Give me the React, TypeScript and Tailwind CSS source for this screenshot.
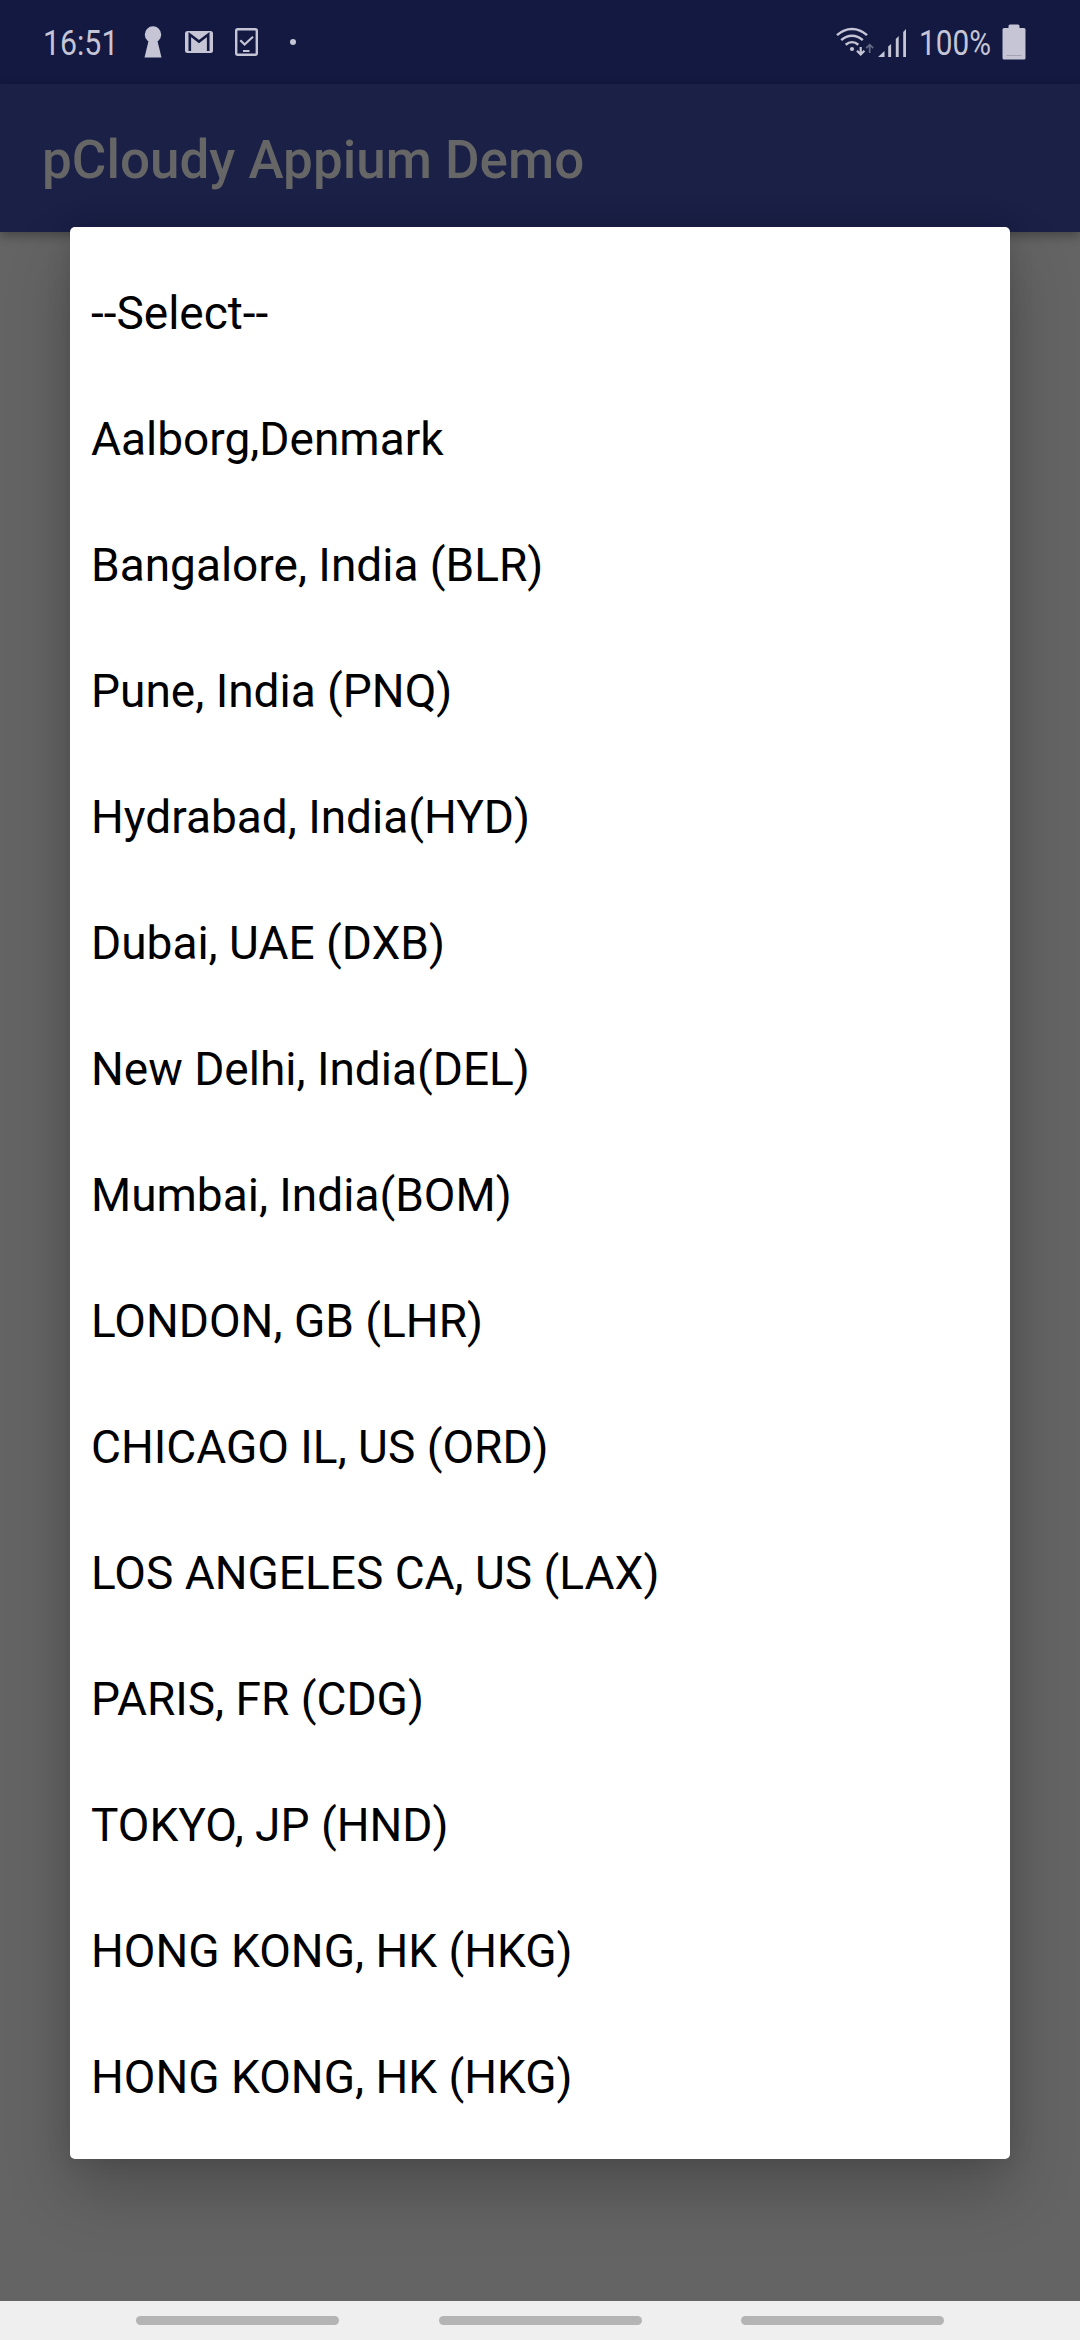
const options = [
  '--Select--',
  'Aalborg,Denmark',
  'Bangalore, India (BLR)',
  'Pune, India (PNQ)',
  'Hydrabad, India(HYD)',
  'Dubai, UAE (DXB)',
  'New Delhi, India(DEL)',
  'Mumbai, India(BOM)',
  'LONDON, GB (LHR)',
  'CHICAGO IL, US (ORD)',
  'LOS ANGELES CA, US (LAX)',
  'PARIS, FR (CDG)',
  'TOKYO, JP (HND)',
  'HONG KONG, HK (HKG)',
  'HONG KONG, HK (HKG)',
];

function KeyholeIcon() {
  return (
    <svg className="ml-[27px] h-[32px] w-[18px]" viewBox="0 0 18 32" fill="currentColor">
      <circle cx="9" cy="8.5" r="8.2" />
      <path d="M5 13h8l4.500 18.500H.5z" />
    </svg>
  );
}

function MailIcon() {
  return (
    <svg className="ml-[23px] h-[24px] w-[28px]" viewBox="0 0 28 24">
      <rect x="0" y="1" width="28" height="22" rx="2.5" fill="currentColor" />
      <path d="M4.8 21V4.5L14 11.5l9.2-7V21" fill="none" stroke="#131940" strokeWidth="2.6" />
    </svg>
  );
}

function DeviceCheckIcon() {
  return (
    <svg className="ml-[22px] h-[28px] w-[23px]" viewBox="0 0 23 28" fill="none" stroke="currentColor">
      <rect x="1.2" y="1.2" width="20.6" height="25.6" rx="1.5" strokeWidth="2.4" />
      <path d="M5.3 12.2l4.3 4.3 8.4-7.7" strokeWidth="2.2" />
      <path d="M8 23h6.5" strokeWidth="2" />
    </svg>
  );
}

function WifiIcon() {
  return (
    <svg className="h-[30px] w-[38px]" viewBox="0 0 38 30" fill="none" stroke="currentColor" strokeWidth="2.5">
      <path d="M1 8.2C10-.2 22-.2 31 8.2" />
      <path d="M5.2 13.2c6.5-6 15.1-6 21.6 0" />
      <path d="M9.7 17.8c3.8-3.4 8.8-3.4 12.6 0" />
      <circle cx="16" cy="22" r="2.1" fill="currentColor" stroke="none" />
      <path d="M24.7 20v7M21 23.8l3.700 3.700 3.700-3.700" strokeWidth="2.2" />
      <path d="M33.7 26v-8M30.2 21.2l3.500-3.500 3.500 3.500" strokeWidth="1.8" opacity="0.45" />
    </svg>
  );
}

function SignalIcon() {
  return (
    <svg className="mt-px ml-[4px] h-[29px] w-[29px]" viewBox="0 0 29 29" fill="currentColor">
      <path d="M0 29l6.500-6v6zM10.200 29V18.500l2.900-2.500v13zM17.800 29V11l2.900-3v21zM25.200 29V4L28 1v28z" />
    </svg>
  );
}

function BatteryIcon() {
  return (
    <svg className="ml-[11px] h-[36px] w-[24px]" viewBox="0 0 24 36">
      <path d="M6.500 4V2q0-1.500 1.500-1.500h8q1.500 0 1.500 1.500v2H22q1.500 0 1.500 1.500V34q0 1.500-1.500 1.500H2Q.5 35.500.5 34V5.500Q.5 4 2 4z" fill="currentColor" />
      <path d="M4.500 31.500h15" stroke="#a3a3b5" strokeWidth="1" />
    </svg>
  );
}

function StatusBar() {
  return (
    <div className="flex h-[84px] items-center justify-between bg-[#131940] pr-[54px] pl-[43px] text-[#c5c5d5]">
      <div className="flex items-center">
        <div className="w-[74px] pt-[4px] text-[35px] leading-[80px] whitespace-nowrap">
          <span className="inline-block origin-left scale-x-[0.865]">16:51</span>
        </div>
        <KeyholeIcon />
        <MailIcon />
        <DeviceCheckIcon />
        <div className="ml-[32px] size-[6px] rounded-full bg-current" />
      </div>
      <div className="flex items-center">
        <WifiIcon />
        <SignalIcon />
        <div className="ml-[12px] w-[72px] pt-[4px] text-[35px] leading-[80px] whitespace-nowrap">
          <span className="inline-block origin-left scale-x-[0.85]">100%</span>
        </div>
        <BatteryIcon />
      </div>
    </div>
  );
}

export default function App() {
  return (
    <div className="relative flex h-[2340px] w-[1080px] flex-col overflow-hidden bg-[#646464] font-['Roboto',sans-serif]">
      <StatusBar />
      <header className="flex h-[148px] items-center bg-[#1a2046] pt-[5px] pl-[42px] shadow-[0_4px_10px_rgba(0,0,0,0.3)]">
        <h1 className="text-[53px] leading-none font-medium text-[#666666]">pCloudy Appium Demo</h1>
      </header>
      <div className="flex-1" />
      <ul className="absolute top-[227px] left-[70px] w-[940px] rounded-[5px] bg-white py-[21px] shadow-[0_32px_64px_rgba(0,0,0,0.22),0_0_24px_rgba(0,0,0,0.12)]">
        {options.map((name, i) => (
          <li key={i} className="flex h-[126px] items-center px-[21px] pt-[4px] text-[46px] leading-none text-black">
            {name}
          </li>
        ))}
      </ul>
      <nav className="relative flex h-[39px] items-start justify-center gap-[99.5px] bg-[#efefef] pt-[15px]">
        <div className="h-[9px] w-[203px] rounded-full bg-[#b4b4b4]" />
        <div className="h-[9px] w-[203px] rounded-full bg-[#b4b4b4]" />
        <div className="h-[9px] w-[203px] rounded-full bg-[#b4b4b4]" />
      </nav>
    </div>
  );
}
